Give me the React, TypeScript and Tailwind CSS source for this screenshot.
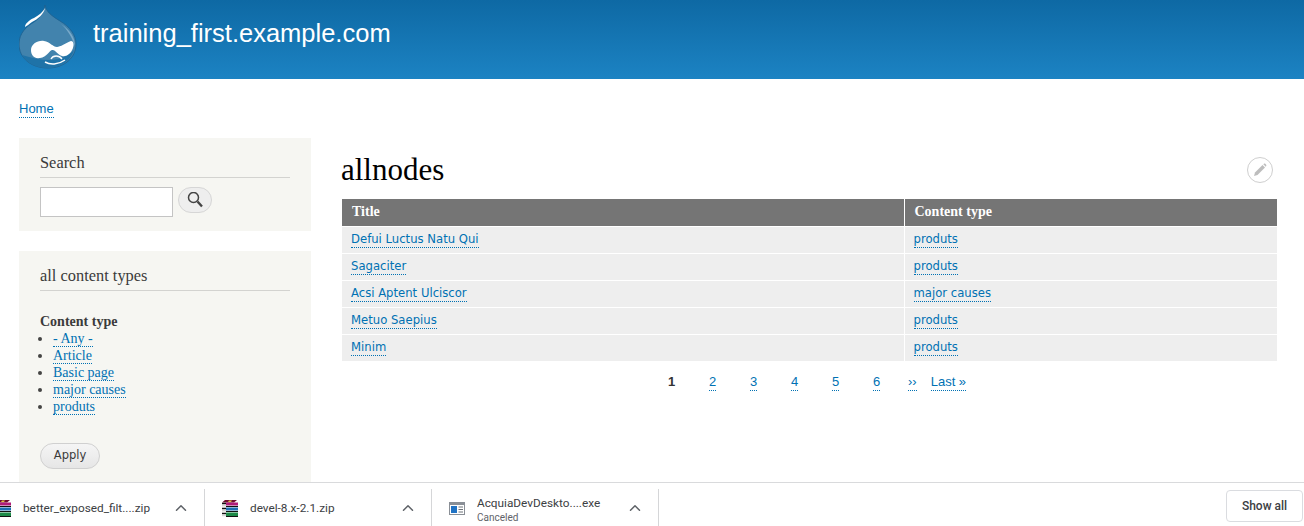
import { ChevronUp } from 'lucide-react'

const rows = [
  { title: 'Defui Luctus Natu Qui', type: 'produts' },
  { title: 'Sagaciter', type: 'produts' },
  { title: 'Acsi Aptent Ulciscor', type: 'major causes' },
  { title: 'Metuo Saepius', type: 'produts' },
  { title: 'Minim', type: 'produts' },
]

const filtros = ['- Any -', 'Article', 'Basic page', 'major causes', 'produts']
const paginas = ['2', '3', '4', '5', '6']

function DrupalLogo() {
  return (
    <svg width="58" height="64" viewBox="19 5 58 64" className="shrink-0 self-start mt-[5px]">
      <path d="M45 5 C46 12 52 16 60 21 C70 27 76 35 76 44 C76 58 64 68 48 68 C31 68 19 58 19 44 C19 33 27 26 34 22 C40 18 44 12 45 5 Z" fill="#4283ad" stroke="#1d5f8e" strokeWidth="0.8" />
      <path d="M22 55 C32 58 40 60 50 60 C60 60 68 56 74 50 C71 61 60 68 48 68 C35 68 26 62 22 55 Z" fill="#1f73a8" />
      <path d="M61 24 C70 30 75 37 75 46 C72 38 68 30 61 24 Z" fill="#79a9c9" />
      <path d="M45 8 C44 14 38 19 32 22 C29 24 27 26 25 27 C25 24 29 20 34 18 C39 15 43 12 45 8 Z" fill="#ffffff" />
      <path d="M31 50 C31 44 38 40 44 41 C50 42 53 47 57 47 C60 47 66 43 71 41 C74 41 74 45 73 48 C71 54 66 57 62 56 C58 55 55 49 52 50 C49 51 47 57 40 58 C34 59 31 55 31 50 Z" fill="#ffffff" />
      <path d="M45 62 C50 65 58 65 65 60" fill="none" stroke="#ffffff" strokeWidth="1.5" />
      <path d="M51 59 C53 55 59 55 62 59" fill="none" stroke="#ffffff" strokeWidth="1.3" />
    </svg>
  )
}

function RarIcon() {
  return (
    <svg width="16" height="17" viewBox="0 0 16 17" className="shrink-0">
      <path d="M3 0H15L12 2.5H0Z" fill="#6d1030" />
      <path d="M7 0.5H10L9 2H6Z" fill="#e0c040" />
      <rect x="4" y="2.5" width="12" height="3" fill="#b01c78" />
      <rect x="4" y="7.5" width="12" height="3" fill="#1f6fb5" />
      <rect x="4" y="12.5" width="12" height="3.5" fill="#1d8a48" />
      <path d="M4 6.5H16M4 11.5H16M4 16.5H16" stroke="#111" strokeWidth="1" />
      <path d="M0 3.5H4M0 8.5H4M0 13.5H4" stroke="#111" strokeWidth="1.4" />
      <path d="M0 5.8H4M0 10.8H4M0 15.5H4" stroke="#d8d8d8" strokeWidth="1.6" />
    </svg>
  )
}

function ExeIcon() {
  return (
    <svg width="16" height="13" viewBox="0 0 16 13" className="shrink-0">
      <rect x="0.5" y="0.5" width="15" height="12" fill="#ffffff" stroke="#8a8f96" />
      <rect x="1" y="1" width="14" height="2" fill="#8a8f96" />
      <rect x="2" y="4" width="6" height="7" fill="#2173c4" />
      <path d="M9.5 5H14M9.5 7.5H14M9.5 10H14" stroke="#6d7278" strokeWidth="1" />
    </svg>
  )
}

function Descarga({ nome, icone, status, corte }: { nome: string; icone: React.ReactNode; status?: string; corte?: boolean }) {
  return (
    <div className={`w-[227px] h-[38px] flex items-center shrink-0 border-r border-[#d5d6d8] pl-[17px] ${corte ? '-ml-[22px]' : ''}`}>
      <div className="w-[16px] flex justify-center">{icone}</div>
      <div className={`ml-[12px] w-[148px] leading-[14px] ${status ? 'mt-[4px]' : ''}`}>
        <p className="text-[11.8px] text-[#3c4043] whitespace-nowrap">{nome}</p>
        {status && <p className="text-[10px] text-[#5f6368] mt-[1px]">{status}</p>}
      </div>
      <ChevronUp size={18} strokeWidth={2} className="text-[#5f6368] ml-[1px]" />
    </div>
  )
}

export default function App() {
  return (
    <div className="h-[526px] w-[1304px] overflow-hidden flex flex-col bg-white font-['Liberation_Sans',sans-serif]">
      <header className="h-[79px] shrink-0 bg-gradient-to-b from-[#0e69a4] to-[#1c83c3] flex items-center pl-[19px]">
        <DrupalLogo />
        <h1 className="ml-[16px] -mt-[13px] text-[25.5px] text-white">training_first.example.com</h1>
      </header>

      <div className="flex-1 min-h-0 overflow-hidden px-[19px]">
        <div className="h-[59px] pt-[21px]">
          <a className="text-[13px] leading-[17px] text-[#0071b3] border-b border-dotted border-[#0071b3] inline-block align-top">Home</a>
        </div>

        <div className="flex">
          {/* Sidebar */}
          <aside className="w-[292px] shrink-0 font-['Liberation_Serif',serif]">
            <div className="bg-[#f6f6f2] h-[93px] px-[21px] pt-[15px]">
              <h2 className="text-[16.4px] leading-[20px] text-[#3b3b3b] border-b border-[#d3d3d0] h-[25px]">Search</h2>
              <div className="flex mt-[9px]">
                <input className="w-[133px] h-[30px] bg-white border border-[#c4c4c4] outline-none" />
                <button className="ml-[5px] w-[34px] h-[26px] rounded-[13px] bg-[#eeeeee] border border-[#d6d6d6] flex items-center justify-center">
                  <svg width="17" height="17" viewBox="0 0 17 17">
                    <circle cx="6.5" cy="5.5" r="5" fill="none" stroke="#444" strokeWidth="1.5" />
                    <path d="M10.5 9.5L15 14.5" stroke="#444" strokeWidth="2.4" />
                  </svg>
                </button>
              </div>
            </div>

            <div className="bg-[#f6f6f2] mt-[20px] h-[240px] px-[21px] pt-[15px]">
              <h2 className="text-[16.4px] leading-[20px] text-[#3b3b3b] border-b border-[#d3d3d0] h-[25px]">all content types</h2>
              <p className="mt-[22px] text-[14px] leading-[17px] font-bold text-[#3b3b3b]">Content type</p>
              <ul className="list-disc pl-[13px] text-[14px] leading-[17px] text-[#444]">
                {filtros.map((f) => (
                  <li key={f}>
                    <a className="text-[#0071b3] border-b border-dotted border-[#0071b3]">{f}</a>
                  </li>
                ))}
              </ul>
              <button className="mt-[28px] w-[60px] h-[26px] rounded-[13px] bg-gradient-to-b from-[#f5f5f5] to-[#e6e6e6] border border-[#d0d0d0] text-[11.5px] text-[#3a3a3a] font-['DejaVu_Sans',sans-serif]">
                Apply
              </button>
            </div>
          </aside>

          {/* Conteudo */}
          <main className="ml-[30px] w-[936px]">
            <div className="flex justify-between items-center h-[61px] pt-[3px] pr-[4px]">
              <h2 className="text-[31px] text-black font-['Liberation_Serif',serif]">allnodes</h2>
              <div className="w-[26px] h-[26px] rounded-full border border-[#cfcfcf] flex items-center justify-center">
                <svg width="14" height="14" viewBox="0 0 14 14">
                  <path d="M1 13L2 9.5L9.5 2L12 4.5L4.5 12Z" fill="#bdbdbd" />
                  <path d="M10.3 1.2L11 0.7C11.5 0.4 12 0.5 12.5 1L13 1.5C13.5 2 13.5 2.5 13.2 3L12.8 3.7Z" fill="#bdbdbd" />
                </svg>
              </div>
            </div>

            <table className="ml-px w-[935px] table-fixed border-collapse">
              <thead>
                <tr className="h-[27px] bg-[#757575] border-b border-white">
                  <th className="w-[562px] pl-[10px] pb-[2px] text-left text-[14px] font-bold text-white font-['Liberation_Serif',serif]">Title</th>
                  <th className="pl-[10px] pb-[2px] text-left text-[14px] font-bold text-white border-l border-white font-['Liberation_Serif',serif]">Content type</th>
                </tr>
              </thead>
              <tbody className="font-['DejaVu_Sans',sans-serif] text-[11.65px]">
                {rows.map((r) => (
                  <tr key={r.title} className="h-[27px] bg-[#eeeeee] border-b border-white">
                    <td className="pl-[9px]">
                      <a className="text-[#0071b3] border-b border-dotted border-[#0071b3] pb-[1px]">{r.title}</a>
                    </td>
                    <td className="pl-[9px] border-l border-white">
                      <a className="text-[#0071b3] border-b border-dotted border-[#0071b3] pb-[1px]">{r.type}</a>
                    </td>
                  </tr>
                ))}
              </tbody>
            </table>

            <div className="flex mt-[11px] text-[13px] leading-[17px] pl-[327px]">
              <span className="w-[41px] font-bold text-[#333]">1</span>
              {paginas.map((p) => (
                <span key={p} className="w-[41px]">
                  <a className="text-[#0071b3] border-b border-dotted border-[#0071b3] inline-block">{p}</a>
                </span>
              ))}
              <a className="-ml-[6px] text-[#0071b3] border-b border-dotted border-[#0071b3] inline-block h-[18px]">››</a>
              <a className="ml-[14px] text-[#0071b3] border-b border-dotted border-[#0071b3] inline-block h-[18px]">Last »</a>
            </div>
          </main>
        </div>
      </div>

      {/* Barra de downloads */}
      <footer className="h-[44px] shrink-0 bg-white border-t border-[#d9dadc] flex items-start pt-[6px] font-['Roboto',sans-serif]">
        <Descarga corte nome="better_exposed_filt....zip" icone={<RarIcon />} />
        <Descarga nome="devel-8.x-2.1.zip" icone={<RarIcon />} />
        <Descarga nome="AcquiaDevDeskto....exe" status="Canceled" icone={<ExeIcon />} />
        <button className="ml-auto mr-[1px] mt-[1px] w-[77px] h-[32px] rounded-[4px] border border-[#dadce0] text-[12px] text-[#3c4043] font-medium">
          Show all
        </button>
      </footer>
    </div>
  )
}
